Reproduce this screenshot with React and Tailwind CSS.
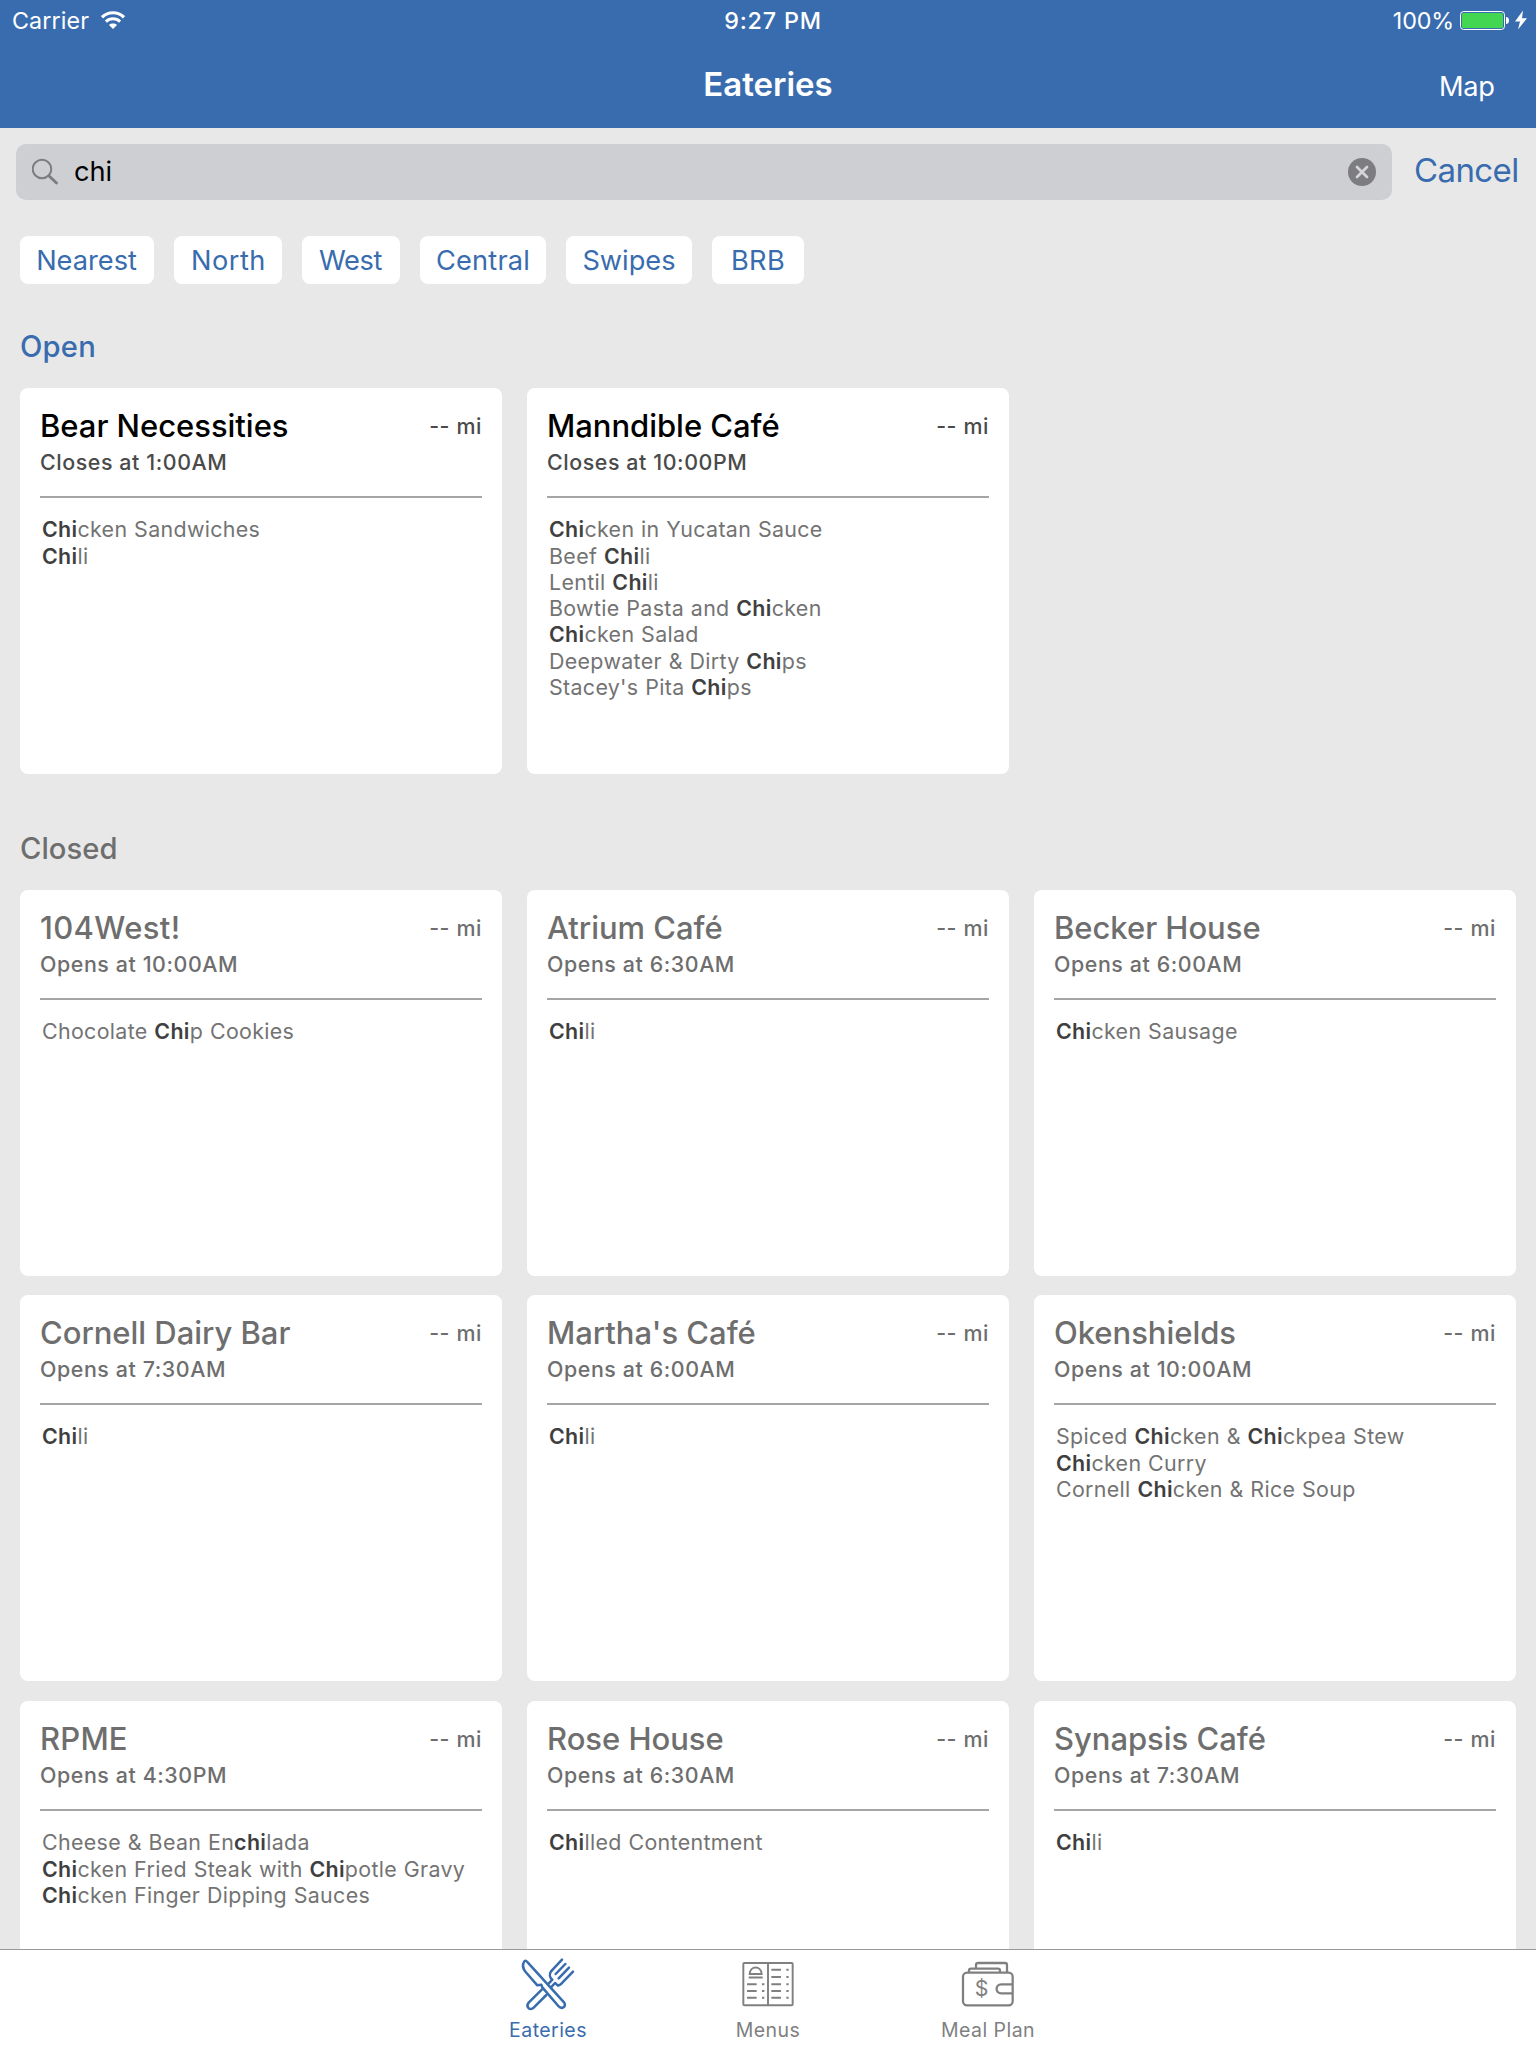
const OPEN = [
  {
    name: "Bear Necessities",
    hours: "Closes at 1:00AM",
    items: ["Chicken Sandwiches", "Chili"],
  },
  {
    name: "Manndible Café",
    hours: "Closes at 10:00PM",
    items: [
      "Chicken in Yucatan Sauce",
      "Beef Chili",
      "Lentil Chili",
      "Bowtie Pasta and Chicken",
      "Chicken Salad",
      "Deepwater & Dirty Chips",
      "Stacey's Pita Chips",
    ],
  },
];

const CLOSED = [
  {
    spacing: "",
    places: [
      {
        name: "104West!",
        nameCls: "tracking-[0.35px]",
        hours: "Opens at 10:00AM",
        items: ["Chocolate Chip Cookies"],
      },
      { name: "Atrium Café", hours: "Opens at 6:30AM", items: ["Chili"] },
      { name: "Becker House", hours: "Opens at 6:00AM", items: ["Chicken Sausage"] },
    ],
  },
  {
    spacing: "mt-[19px]",
    places: [
      { name: "Cornell Dairy Bar", hours: "Opens at 7:30AM", items: ["Chili"] },
      { name: "Martha's Café", hours: "Opens at 6:00AM", items: ["Chili"] },
      {
        name: "Okenshields",
        hours: "Opens at 10:00AM",
        items: ["Spiced Chicken & Chickpea Stew", "Chicken Curry", "Cornell Chicken & Rice Soup"],
      },
    ],
  },
  {
    spacing: "mt-5",
    places: [
      {
        name: "RPME",
        nameCls: "tracking-[0.2px]",
        hours: "Opens at 4:30PM",
        items: [
          "Cheese & Bean Enchilada",
          "Chicken Fried Steak with Chipotle Gravy",
          "Chicken Finger Dipping Sauces",
        ],
      },
      { name: "Rose House", hours: "Opens at 6:30AM", items: ["Chilled Contentment"] },
      { name: "Synapsis Café", hours: "Opens at 7:30AM", items: ["Chili"] },
    ],
  },
];

const FILTERS = [
  { label: "Nearest", cls: "w-[134px] pr-px" },
  { label: "North", cls: "w-[108px] pl-px tracking-[0.5px]" },
  { label: "West", cls: "w-[98px] tracking-[-0.4px] pr-px" },
  { label: "Central", cls: "w-[126px] tracking-[0.2px]" },
  { label: "Swipes", cls: "w-[126px]" },
  { label: "BRB", cls: "w-[92px] tracking-[0.3px]" },
];

function Highlighted({ text }) {
  return text.split(/(chi)/i).map((part, i) =>
    i % 2 === 1 ? (
      <span key={i} className="font-semibold text-[#3f3f3f]">
        {part}
      </span>
    ) : (
      part
    )
  );
}

function Card({ place, open }) {
  return (
    <article className="h-[386px] w-[482px] shrink-0 rounded-lg bg-white px-5 pt-[18px]">
      <div className="flex items-start justify-between">
        <h3
          className={`h-10 whitespace-nowrap text-[31px] font-medium leading-10 ${
            place.nameCls ?? "tracking-[-0.03px]"
          } ${open ? "text-black" : "text-[#6e6e6e]"}`}
        >
          {place.name}
        </h3>
        <span
          className={`mt-[7px] text-[21.4px] font-medium leading-[26px] tracking-[0.6px] ${
            open ? "text-[#4a4a4a]" : "text-[#6e6e6e]"
          }`}
        >
          -- mi
        </span>
      </div>
      <p
        className={`mt-[3px] text-[21.4px] font-medium leading-[26px] tracking-[0.58px] ${
          open ? "text-[#4a4a4a]" : "text-[#6e6e6e]"
        }`}
      >
        {place.hours}
      </p>
      <div className="mt-[21px] h-0.5 bg-[#a5a5a5]" />
      <ul className="mt-[18.4px] pl-0.5 text-[21.4px] leading-[26.25px] tracking-[0.33px] text-[#737373] [word-spacing:0.4px]">
        {place.items.map((item) => (
          <li key={item} className="whitespace-nowrap">
            <Highlighted text={item} />
          </li>
        ))}
      </ul>
    </article>
  );
}

function WifiIcon() {
  return (
    <svg className="h-[18px] w-6" viewBox="0 0 24 18" fill="none" stroke="#fff">
      <path d="M1 6.300 C7 0.200 17 0.200 23 6.300" strokeWidth="3.200" />
      <path d="M4.900 10.600 C9 6.800 15 6.800 19.100 10.600" strokeWidth="3" />
      <path d="M12 18 L8 13.900 C10.200 12 13.800 12 16 13.900 Z" fill="#fff" stroke="none" />
    </svg>
  );
}

function BatteryIcon() {
  return (
    <svg className="h-5 w-[50px]" viewBox="0 0 50 20">
      <rect x="0.5" y="1.5" width="44" height="18" rx="3.2" fill="none" stroke="#fff" />
      <rect x="2" y="3" width="41" height="15" rx="1.6" fill="#43d651" />
      <path d="M46 7 Q49 7.400 49 10.500 Q49 13.600 46 14 Z" fill="#fff" />
    </svg>
  );
}

function UtensilsIcon() {
  return (
    <svg
      className="h-[60px] w-[60px]"
      viewBox="54 26 180 180"
      fill="none"
      stroke="#396cae"
      strokeWidth="7.5"
      strokeLinecap="round"
      strokeLinejoin="round"
    >
      <path d="M126 132 L86 172 C76 184 90 198 101 187 L139 149" />
      <path d="M186 43 L153 78 C147 87 149 97 157 103 L143 118" />
      <path d="M219 79 L182 117 L174 121 L165 113 L153 126" />
      <path d="M196 56 L167 86 M207 67 L176 99" />
      <path
        d="M73 48 C67 57 69 70 77 80 L112 120 L124 118 L127 126 L175 182 C185 194 201 184 192 171 L83 51 C79 46 76 45 73 48 Z"
        fill="#fff"
      />
    </svg>
  );
}

function MenuIcon() {
  return (
    <svg
      className="h-[60px] w-[60px]"
      viewBox="39 26 180 180"
      fill="none"
      stroke="#808080"
      strokeWidth="5.8"
    >
      <rect x="55" y="53" width="148" height="127" rx="3" />
      <path d="M129 53 V180" />
      <path d="M74 86 C75 60 109 60 110 86 Z M71 96.500 H113" />
      <path d="M66 117 H95 M66 137 H95 M66 157 H95 M111 117 H118 M111 137 H118 M111 157 H118" />
      <path d="M139 73.500 H168 M139 95 H168 M139 117 H168 M139 137 H168 M139 157 H168" />
      <path d="M184 73.500 H191 M184 95 H191 M184 117 H191 M184 137 H191 M184 157 H191" />
    </svg>
  );
}

function WalletIcon() {
  return (
    <svg
      className="h-[60px] w-[60px]"
      viewBox="54 26 180 180"
      fill="none"
      stroke="#808080"
      strokeWidth="6.8"
    >
      <rect x="69" y="82" width="149" height="98" rx="12" />
      <path d="M108 68 V59 Q108 53 114 53 H195 Q201 53 201 59 V82" />
      <path d="M87 82 V76 Q87 70 93 70 H174 Q180 70 180 76 V82" />
      <path d="M218 117 H184 C165 117 165 144 184 144 H218" />
      <text
        x="125"
        y="153"
        textAnchor="middle"
        fill="#808080"
        stroke="none"
        fontSize="64"
        fontFamily="Inter, sans-serif"
      >
        $
      </text>
    </svg>
  );
}

const TABS = [
  { label: "Eateries", Icon: UtensilsIcon, cls: "text-[#396cae]" },
  { label: "Menus", Icon: MenuIcon, cls: "text-[#808080]" },
  { label: "Meal Plan", Icon: WalletIcon, cls: "text-[#808080]" },
];

export default function App() {
  return (
    <div className="flex h-[2048px] w-[1536px] flex-col overflow-hidden bg-[#e8e8e8] font-['Inter',sans-serif]">
      <header className="h-32 shrink-0 bg-[#396cae] text-white">
        <div className="grid h-10 grid-cols-3 text-[23.3px] leading-[42px]">
          <div className="flex pl-3">
            <span className="tracking-[0.1px]">Carrier</span>
            <span className="ml-[12px] mt-[11px]">
              <WifiIcon />
            </span>
          </div>
          <div className="pl-2.5 text-center font-medium tracking-[0.8px]">9:27 PM</div>
          <div className="flex justify-end pr-[9px]">
            <span className="mr-[6px] tracking-[-0.15px]">100%</span>
            <span className="mt-2.5">
              <BatteryIcon />
            </span>
            <svg className="ml-[5px] mt-[10px] h-5 w-3" viewBox="0 0 12 20">
              <path d="M8 0.500 L0 11.500 H5 L3 19.500 L12 8.300 H7 Z" fill="#fff" />
            </svg>
          </div>
        </div>
        <div className="grid h-[88px] grid-cols-3 pt-6">
          <span />
          <h1 className="text-center text-[33px] font-semibold leading-10">Eateries</h1>
          <span className="pr-[41.5px] pt-[3px] text-right text-[27.2px] leading-10 tracking-[-0.3px]">
            Map
          </span>
        </div>
      </header>

      <div className="flex h-[72px] shrink-0 items-end pl-4">
        <div className="flex h-14 w-[1376px] items-center rounded-[10px] bg-[#cecfd3] pl-4 pr-4">
          <svg
            className="h-7 w-7"
            viewBox="0 0 28 28"
            fill="none"
            stroke="#7c7c81"
            strokeLinecap="round"
          >
            <circle cx="10" cy="11" r="9.300" strokeWidth="2" />
            <path d="M16.800 17.800 L24.500 25" strokeWidth="2.900" />
          </svg>
          <span className="ml-[14px] grow text-[27.2px] leading-[56px] text-black">chi</span>
          <svg className="h-7 w-7" viewBox="0 0 28 28">
            <circle cx="14" cy="14" r="14" fill="#7c7c81" />
            <path
              d="M9 9 L19 19 M19 9 L9 19"
              stroke="#d4d5d8"
              strokeWidth="2.800"
              strokeLinecap="round"
            />
          </svg>
        </div>
        <span className="ml-[22px] h-14 text-[33px] leading-[52px] tracking-[-0.6px] text-[#396cae]">
          Cancel
        </span>
      </div>

      <nav className="mt-9 flex h-12 shrink-0 gap-5 pl-5">
        {FILTERS.map((f) => (
          <span
            key={f.label}
            className={`rounded-lg bg-white text-center text-[27.2px] leading-[50px] text-[#396cae] ${f.cls}`}
          >
            {f.label}
          </span>
        ))}
      </nav>

      <h2 className="ml-5 mt-[43px] h-10 shrink-0 text-[29.2px] font-medium leading-10 tracking-[0.2px] text-[#396cae]">
        Open
      </h2>
      <section className="mt-[21px] flex shrink-0 gap-[25px] pl-5">
        {OPEN.map((p) => (
          <Card key={p.name} place={p} open />
        ))}
      </section>

      <h2 className="ml-5 mt-[55px] h-10 shrink-0 text-[29.2px] font-medium leading-10 tracking-[0.05px] text-[#6e6e6e]">
        Closed
      </h2>
      <section className="mt-[21px] flex min-h-0 grow flex-col overflow-hidden pl-5">
        {CLOSED.map((row, i) => (
          <div key={i} className={`flex shrink-0 gap-[25px] ${row.spacing}`}>
            {row.places.map((p) => (
              <Card key={p.name} place={p} />
            ))}
          </div>
        ))}
      </section>

      <footer className="flex h-[99px] shrink-0 justify-center border-t border-[#999999] bg-white">
        {TABS.map(({ label, Icon, cls }) => (
          <div key={label} className={`flex w-[220px] flex-col items-center pt-1 ${cls}`}>
            <Icon />
            <span className="mt-1 text-[19.5px] leading-6 tracking-[0.45px]">{label}</span>
          </div>
        ))}
      </footer>
    </div>
  );
}
